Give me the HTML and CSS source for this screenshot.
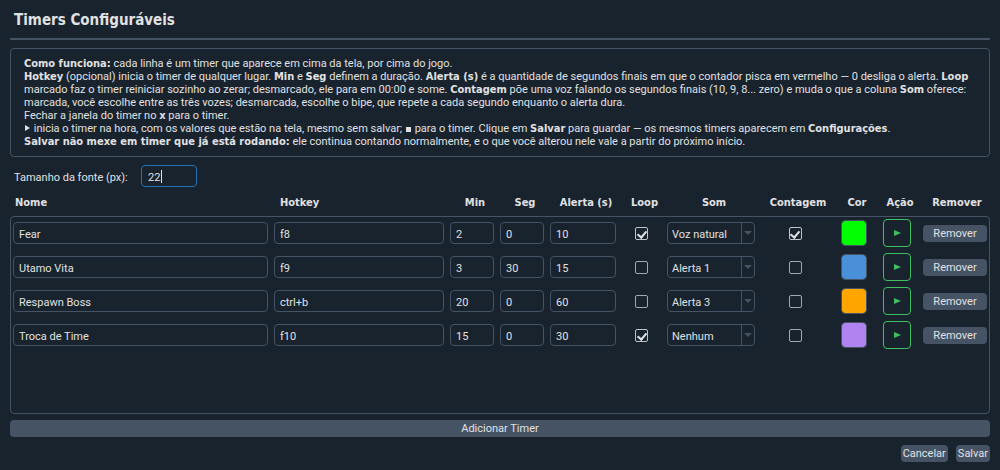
FILE: index.html
```
<!DOCTYPE html>
<html lang="pt-br">
<head>
  <meta charset="UTF-8">
  <meta name="viewport" content="width=device-width, initial-scale=1.0">
  <title>Timers Configuráveis</title>
  <link rel="stylesheet" href="styles.css">
</head>
<body>

<header>
  <h1>Timers Configuráveis</h1>
</header>

<div class="info">
  <p><b>Como funciona:</b> cada linha é um timer que aparece em cima da tela, por cima do jogo.</p>
  <p><b>Hotkey</b> (opcional) inicia o timer de qualquer lugar. <b>Min</b> e <b>Seg</b> definem a duração. <b>Alerta (s)</b> é a quantidade de segundos finais em que o contador pisca em vermelho — 0 desliga o alerta. <b>Loop</b> marcado faz o timer reiniciar sozinho ao zerar; desmarcado, ele para em 00:00 e some. <b>Contagem</b> põe uma voz falando os segundos finais (10, 9, 8... zero) e muda o que a coluna <b>Som</b> oferece: marcada, você escolhe entre as três vozes; desmarcada, escolhe o bipe, que repete a cada segundo enquanto o alerta dura.</p>
  <p>Fechar a janela do timer no <b>x</b> para o timer.</p>
  <p><svg class="glifo" viewBox="0 0 7 8"><path d="M1 1L6 4L1 7Z"/></svg> inicia o timer na hora, com os valores que estão na tela, mesmo sem salvar; <svg class="glifo" viewBox="0 0 7 8"><path d="M1 3H6V8H1Z"/></svg> para o timer. Clique em <b>Salvar</b> para guardar — os mesmos timers aparecem em <b>Configurações</b>.</p>
  <p><b>Salvar não mexe em timer que já está rodando:</b> ele continua contando normalmente, e o que você alterou nele vale a partir do próximo início.</p>
</div>

<div class="fonte">
  <label for="tamanhoFonte">Tamanho da fonte (px):</label>
  <div class="editor">
    <input type="text" id="tamanhoFonte" class="campo" inputmode="numeric" value="22">
    <span class="cursor"></span>
  </div>
</div>

<table class="timers">
  <thead>
    <tr>
      <th>Nome</th>
      <th>Hotkey</th>
      <th>Min</th>
      <th>Seg</th>
      <th>Alerta (s)</th>
      <th>Loop</th>
      <th>Som</th>
      <th>Contagem</th>
      <th>Cor</th>
      <th>Ação</th>
      <th>Remover</th>
    </tr>
  </thead>
  <tbody>
    <tr>
      <td><input type="text" class="campo" aria-label="Nome" value="Fear"></td>
      <td><input type="text" class="campo" aria-label="Hotkey" value="f8"></td>
      <td><input type="text" class="campo" aria-label="Min" value="2"></td>
      <td><input type="text" class="campo" aria-label="Seg" value="0"></td>
      <td><input type="text" class="campo" aria-label="Alerta (s)" value="10"></td>
      <td><input type="checkbox" aria-label="Loop" checked></td>
      <td>
        <div class="combo">
          <select aria-label="Som"><option>Voz natural</option></select>
          <svg viewBox="0 0 8 4"><path d="M0 0H8L4 4Z"/></svg>
        </div>
      </td>
      <td><input type="checkbox" aria-label="Contagem" checked></td>
      <td><input type="color" aria-label="Cor" value="#00ff00"></td>
      <td><button class="iniciar" aria-label="Iniciar"><svg viewBox="0 0 7 6"><path d="M0 0L7 3L0 6Z"/></svg></button></td>
      <td><button class="botao">Remover</button></td>
    </tr>
    <tr>
      <td><input type="text" class="campo" aria-label="Nome" value="Utamo Vita"></td>
      <td><input type="text" class="campo" aria-label="Hotkey" value="f9"></td>
      <td><input type="text" class="campo" aria-label="Min" value="3"></td>
      <td><input type="text" class="campo" aria-label="Seg" value="30"></td>
      <td><input type="text" class="campo" aria-label="Alerta (s)" value="15"></td>
      <td><input type="checkbox" aria-label="Loop"></td>
      <td>
        <div class="combo">
          <select aria-label="Som"><option>Alerta 1</option></select>
          <svg viewBox="0 0 8 4"><path d="M0 0H8L4 4Z"/></svg>
        </div>
      </td>
      <td><input type="checkbox" aria-label="Contagem"></td>
      <td><input type="color" aria-label="Cor" value="#4a90d9"></td>
      <td><button class="iniciar" aria-label="Iniciar"><svg viewBox="0 0 7 6"><path d="M0 0L7 3L0 6Z"/></svg></button></td>
      <td><button class="botao">Remover</button></td>
    </tr>
    <tr>
      <td><input type="text" class="campo" aria-label="Nome" value="Respawn Boss"></td>
      <td><input type="text" class="campo" aria-label="Hotkey" value="ctrl+b"></td>
      <td><input type="text" class="campo" aria-label="Min" value="20"></td>
      <td><input type="text" class="campo" aria-label="Seg" value="0"></td>
      <td><input type="text" class="campo" aria-label="Alerta (s)" value="60"></td>
      <td><input type="checkbox" aria-label="Loop"></td>
      <td>
        <div class="combo">
          <select aria-label="Som"><option>Alerta 3</option></select>
          <svg viewBox="0 0 8 4"><path d="M0 0H8L4 4Z"/></svg>
        </div>
      </td>
      <td><input type="checkbox" aria-label="Contagem"></td>
      <td><input type="color" aria-label="Cor" value="#ffa500"></td>
      <td><button class="iniciar" aria-label="Iniciar"><svg viewBox="0 0 7 6"><path d="M0 0L7 3L0 6Z"/></svg></button></td>
      <td><button class="botao">Remover</button></td>
    </tr>
    <tr>
      <td><input type="text" class="campo" aria-label="Nome" value="Troca de Time"></td>
      <td><input type="text" class="campo" aria-label="Hotkey" value="f10"></td>
      <td><input type="text" class="campo" aria-label="Min" value="15"></td>
      <td><input type="text" class="campo" aria-label="Seg" value="0"></td>
      <td><input type="text" class="campo" aria-label="Alerta (s)" value="30"></td>
      <td><input type="checkbox" aria-label="Loop" checked></td>
      <td>
        <div class="combo">
          <select aria-label="Som"><option>Nenhum</option></select>
          <svg viewBox="0 0 8 4"><path d="M0 0H8L4 4Z"/></svg>
        </div>
      </td>
      <td><input type="checkbox" aria-label="Contagem"></td>
      <td><input type="color" aria-label="Cor" value="#b084f0"></td>
      <td><button class="iniciar" aria-label="Iniciar"><svg viewBox="0 0 7 6"><path d="M0 0L7 3L0 6Z"/></svg></button></td>
      <td><button class="botao">Remover</button></td>
    </tr>
  </tbody>
</table>

<button class="botao adicionar">Adicionar Timer</button>

<div class="rodape">
  <button class="botao">Cancelar</button>
  <button class="botao">Salvar</button>
</div>

<script>
  // Cursor no final do tamanho da fonte
  const tamanho = document.getElementById("tamanhoFonte");
  tamanho.focus();
  tamanho.setSelectionRange(tamanho.value.length, tamanho.value.length);

  // O cursor desenhado some assim que o usuário mexe no campo
  const esconderCursor = () => document.querySelector(".cursor").hidden = true;
  tamanho.addEventListener("keydown", esconderCursor);
  tamanho.addEventListener("blur", esconderCursor);
</script>
</body>
</html>
```

FILE: styles.css
```
* {
  box-sizing: border-box;
}

body {
  display: flex;
  flex-direction: column;
  min-height: 100vh;
  margin: 0;
  padding: 0 10px 8px;
  background-color: #19232d;
  color: #e0e1e3;
  font-family: Tahoma, Roboto, sans-serif;
  font-size: 11px;
  line-height: 13px;
}

h1, b, th {
  font-family: Tahoma, "DejaVu Sans Condensed", "DejaVu Sans", sans-serif;
}

/* o negrito não aumenta a altura da linha */
b {
  line-height: 1px;
}

input, select, button {
  margin: 0;
  color: inherit;
  font: inherit;
}

header {
  height: 40px;
  padding: 10px 4px 0;
  border-bottom: 2px solid #455364;
}

h1 {
  margin: 0;
  font-size: 15px;
  line-height: 20px;
}

.info {
  margin-top: 8px;
  padding: 8px 13px;
  border: 1px solid #455364;
  border-radius: 4px;
}

.info p {
  margin: 0;
}

.glifo {
  width: 7px;
  height: 8px;
  fill: #e0e1e3;
}

.fonte {
  display: flex;
  align-items: center;
  margin: 8px 0 0 4px;
}

.fonte label {
  width: 127px;
  padding-top: 2px;
  white-space: nowrap;
}

.campo {
  width: 100%;
  height: 22px;
  padding: 2px 5px 0;
  background-color: #19232d;
  border: 1px solid #455364;
  border-radius: 4px;
}

.editor {
  position: relative;
  display: flex;
  width: 56px;
}

.editor .campo {
  padding-left: 6px;
}

.campo:focus {
  border-color: #1a72bb;
  outline: none;
}

.cursor {
  position: absolute;
  top: 5px;
  left: 20px;
  width: 1px;
  height: 13px;
  background-color: #e0e1e3;
  pointer-events: none;
}

/* tabela */
.timers {
  display: flex;
  flex-direction: column;
  flex: 1;
}

.timers tr {
  display: grid;
  grid-template-columns: minmax(80px, 1fr) 170px 44px 44px 66px 39px 88px 68px 38px 36px 66px;
  column-gap: 6px;
  align-items: center;
}

.timers thead {
  display: block;
  padding: 9px 0 7px 5px;
}

.timers th {
  padding: 0;
  white-space: nowrap;
}

.timers th:nth-child(-n+2) {
  text-align: left;
}

.timers th:nth-child(2) {
  padding-left: 3px;
}

.timers tbody {
  display: flex;
  flex-direction: column;
  flex: 1;
  gap: 6px;
  padding: 2px;
  border: 1px solid #455364;
  border-radius: 4px;
}

.timers td {
  display: flex;
  align-items: center;
  justify-content: center;
  height: 28px;
  padding: 0;
}

.timers td:last-child {
  justify-content: flex-end;
}

input[type="checkbox"] {
  display: flex;
  justify-content: center;
  width: 13px;
  height: 13px;
  appearance: none;
  border: 1px solid #9da9b5;
  border-radius: 2px;
}

input[type="checkbox"]:checked {
  border-color: #c0c4c8;
}

input[type="checkbox"]:checked::after {
  content: "";
  width: 4px;
  height: 7px;
  margin-top: 1px;
  border: solid #e0e1e3;
  border-width: 0 2px 2px 0;
  transform: rotate(40deg);
}

input[type="color"] {
  width: 26px;
  height: 26px;
  padding: 0;
  appearance: none;
  background: none;
  border: 1px solid #455364;
  border-radius: 4px;
  overflow: hidden;
}

input[type="color"]::-webkit-color-swatch-wrapper {
  padding: 0;
}

input[type="color"]::-webkit-color-swatch {
  border: none;
  border-radius: 3px;
}

.combo {
  position: relative;
  width: 100%;
}

.combo select {
  display: block;
  width: 100%;
  height: 22px;
  padding: 2px 14px 0 4px;
  appearance: none;
  background: linear-gradient(#455364, #455364) right 12px top / 1px 100% no-repeat #19232d;
  border: 1px solid #455364;
  border-radius: 4px;
}

.combo svg {
  position: absolute;
  top: 9px;
  right: 3px;
  width: 8px;
  height: 4px;
  fill: #455364;
  pointer-events: none;
}

.iniciar {
  display: flex;
  align-items: center;
  justify-content: center;
  width: 28px;
  height: 28px;
  padding: 0;
  background: none;
  border: 1px solid #3fbf5f;
  border-radius: 4px;
}

.iniciar svg {
  width: 7px;
  height: 6px;
  fill: #3fbf5f;
}

.botao {
  height: 17px;
  padding: 0 2px;
  background-color: #455364;
  border: none;
  border-radius: 4px;
}

.botao:hover {
  background-color: #54687a;
}

td .botao {
  width: 64px;
}

.adicionar {
  margin-top: 6px;
}

.rodape {
  display: flex;
  justify-content: flex-end;
  gap: 8px;
  margin-top: 8px;
}
```
